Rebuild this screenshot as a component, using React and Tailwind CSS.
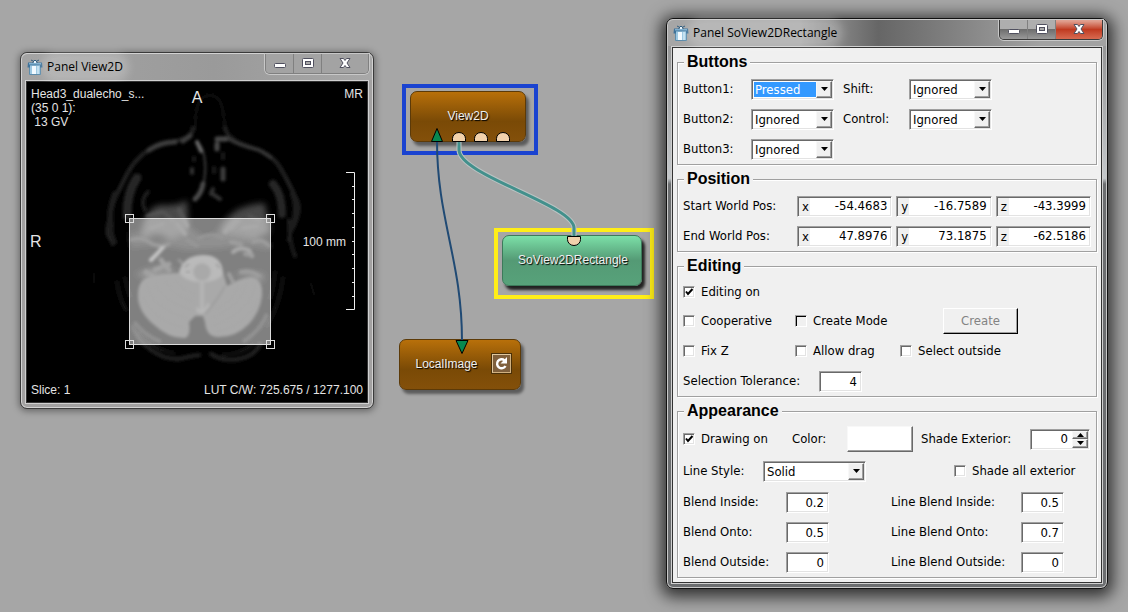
import { useState } from "react";
import { clsx } from "clsx";

const sunken =
  "border border-t-[#a0a0a0] border-l-[#a0a0a0] border-b-white border-r-white shadow-[inset_1px_1px_0_#696969,inset_-1px_-1px_0_#e3e3e3]";
const raised =
  "border border-t-[#f8f8f8] border-l-[#f8f8f8] border-b-[#696969] border-r-[#696969] bg-[#f0f0f0] shadow-[inset_-1px_-1px_0_#a0a0a0]";

const PanelIcon = () => (
  <svg className="w-4 h-4 shrink-0" viewBox="0 0 16 16">
    <path d="M2.500 6h11v9.500h-11z" fill="#9cc8e2" />
    <path d="M2.500 6h11v9.500h-11z" fill="none" stroke="#5d8cab" />
    <path d="M5 7h4v8H5z" fill="#f2faff" />
    <path d="M10 7h2v8h-2z" fill="#c4e0f0" />
    <path d="M1 3.500h14l.5 5H13V6H3v2.500H.5z" fill="#3f7299" />
    <path d="M2 4h12v1.500H2z" fill="#7fb0d0" />
    <path d="M4 1l3 1.500M12 1L9 2.500M5.500 3.500L8 1l2.500 2.500" stroke="#2f5d80" fill="none" />
    <path d="M7 2h2v2H7z" fill="#e8f4fb" />
  </svg>
);

const CaptionButtons = ({ active }) => {
  const face = active
    ? "bg-linear-to-b from-[#aeaeae] from-45% via-[#6e6e6e] via-50% to-[#9a9a9a]"
    : "bg-[#a3a3a3]";
  return (
    <div
      className={clsx(
        "flex h-5 rounded-b-[5px] border border-t-0 overflow-hidden shadow-[0_0_0_1px_#c8c8c8]",
        active ? "border-[#3a3a3a]" : "border-[#808080]"
      )}
    >
      <button aria-label="Minimize" className={clsx("w-7 flex items-center justify-center border-r border-[#808080]", face)}>
        <svg width="14" height="14" viewBox="0 0 14 14">
          <rect x="1.500" y="6.500" width="11" height="4" rx="1" fill="#fff" stroke="#50505f" />
        </svg>
      </button>
      <button aria-label="Maximize" className={clsx("w-7 flex items-center justify-center border-r border-[#808080]", face)}>
        <svg width="14" height="14" viewBox="0 0 14 14">
          <rect x="1.500" y="1.500" width="11" height="9" rx="1" fill="#fff" stroke="#50505f" />
          <rect x="4.500" y="4.500" width="5" height="3" fill="#aaa" stroke="#50505f" />
        </svg>
      </button>
      <button
        aria-label="Close"
        className={clsx(
          "w-[46px] flex items-center justify-center",
          active
            ? "bg-linear-to-b from-[#e0a090] from-5% via-[#c03a20] via-50% to-[#d86a50]"
            : "bg-[#a3a3a3]"
        )}
      >
        <svg width="14" height="14" viewBox="0 0 14 14">
          <path
            d="M2 1.500h3.500L7 3.500l1.500-2H12L9 6l3 4.500H8.500L7 8.500l-1.500 2H2L5 6z"
            fill="#fff"
            stroke="#50505f"
            strokeLinejoin="round"
          />
        </svg>
      </button>
    </div>
  );
};

const Window = ({ title, active, className, children }) => (
  <section
    className={clsx(
      "absolute rounded-[7px] border px-1 pb-1",
      active
        ? "border-[#111] bg-linear-to-b from-[#8c8c8c] via-[#c4c8cb] via-28% to-[#6c6e70] to-29% shadow-[inset_0_0_0_1px_#c9c9c9,0_3px_16px_5px_rgba(0,0,0,0.7)]"
        : "border-[#3a3a3a] bg-[#a2a1a1] shadow-[inset_0_0_0_1px_#d2d2d2,0_1px_7px_1px_rgba(0,0,0,0.4)]",
      className
    )}
  >
    <header
      className={clsx(
        "h-[27px] -mx-[3px] pl-1 pr-[3px] flex items-start justify-between rounded-t-md border-t",
        active
          ? "border-[#c9c9c9] bg-linear-to-r from-[#a6a6a6] from-30% via-[#666] via-48% to-[#a2a2a2] to-85%"
          : "border-[#d2d2d2] bg-linear-to-r from-[#a4a4a4] via-[#9a9a9a] via-55% to-[#a8a8a8]"
      )}
    >
      <div className="flex items-center gap-1 h-[26px] pl-[1px]">
        <PanelIcon />
        <h2 className="font-['Open_Sans','Noto_Sans',sans-serif] text-xs leading-5 text-black rounded-full bg-white/20 shadow-[0_0_8px_6px_rgba(255,255,255,0.2)]">
          {title}
        </h2>
      </div>
      <CaptionButtons active={active} />
    </header>
    <div className="border border-[#d0d0d0]">
      <div className="border border-[#333]">{children}</div>
    </div>
  </section>
);

// Axial slice of the head, drawn in viewer coordinates (340 x 320)
const HeadSlice = () => (
  <svg className="absolute inset-0 w-full h-full" viewBox="0 0 340 320" preserveAspectRatio="none">
    <defs>
      <filter id="soft" x="-20%" y="-20%" width="140%" height="140%">
        <feGaussianBlur stdDeviation="1.500" />
      </filter>
      <filter id="softer" x="-20%" y="-20%" width="140%" height="140%">
        <feGaussianBlur stdDeviation="3" />
      </filter>
    </defs>

    {/* skin and nose */}
    <g fill="none" filter="url(#soft)" strokeLinecap="round">
      <path d="M168 48C168 30 170 13 183 13S197 32 198 48" stroke="#121212" strokeWidth="2" />
      <path d="M166 46C165 58 150 58 136 62S108 76 99 94 86 118 82 138 84 154 86 162" stroke="#222" strokeWidth="4" />
      <path d="M198 46C202 60 216 62 232 68S254 86 262 102 274 122 270 136 264 142 262 158" stroke="#222" strokeWidth="4" />
      <path d="M148 60Q134 60 122 68M163 54L156 59" stroke="#3e3e3e" strokeWidth="5" />
      <path d="M200 56Q212 64 232 68L244 76" stroke="#3a3a3a" strokeWidth="3" />
      <path d="M110 96Q100 110 100 134" stroke="#262626" strokeWidth="9" />
      <path d="M246 102Q255 112 255 132" stroke="#262626" strokeWidth="8" />
      <path d="M88 112Q81 130 84 144" stroke="#1c1c1c" strokeWidth="6" />
      <path d="M266 112Q272 126 266 144" stroke="#1c1c1c" strokeWidth="6" />
      <path d="M121 110Q113 118 118 128" stroke="#1d1d1d" strokeWidth="4" />
      <path d="M90 200Q92 216 99 228M98 196Q100 206 103 214" stroke="#181818" strokeWidth="3" />
      <path d="M256 196Q253 222 240 244M248 190Q246 208 243 216" stroke="#141414" strokeWidth="3" />
      <path d="M84 140Q84 152 88 160M262 138Q262 160 268 174" stroke="#1c1c1c" strokeWidth="4" />
      <path d="M106 245C112 262 132 278 152 277Q164 274 172 273M184 272Q196 280 212 277T233 262" stroke="#242424" strokeWidth="4" />
      <path d="M112 250Q126 268 146 271M196 273Q216 272 226 262" stroke="#141414" strokeWidth="3" />
      <path d="M67 192V200M284 202L287 212" stroke="#101010" strokeWidth="2" />
    </g>

    {/* nasal cavity */}
    <g fill="none" filter="url(#soft)" strokeLinecap="round">
      <path d="M172 62Q177 68 178 80Q179 92 176 103" stroke="#3c3c3c" strokeWidth="2" />
      <path d="M170 60L174 69" stroke="#6a6a6a" strokeWidth="4" />
      <path d="M176 102Q174 112 168 117" stroke="#4c4c4c" strokeWidth="5" />
      <path d="M190 57H199M190 62V67" stroke="#4a4a4a" strokeWidth="5" />
      <path d="M196 87V97" stroke="#3c3c3c" strokeWidth="5" />
      <path d="M165 87V91M184 111L193 117M186 107L184 112" stroke="#333" strokeWidth="4" />
      <path d="M167 76V78M196 72V76M187 86V90" stroke="#1c1c1c" strokeWidth="4" />
    </g>

    {/* skull base */}
    <g filter="url(#softer)">
      <path d="M114 150Q120 122 136 123T160 118L162 150Q152 164 140 156T112 160z" fill="#484848" />
      <path d="M194 144Q204 128 220 124T238 122L243 150 226 158Q208 158 202 162L190 156z" fill="#464646" />
      <path d="M102 150Q116 152 124 158T158 150L168 148 176 156 190 150Q210 152 243 160V168Q214 160 196 166L160 168Q130 160 104 166z" fill="#242424" />
      <path d="M108 192Q124 184 140 186L152 190 120 198zM206 192Q222 188 238 192L236 200z" fill="#333" />
    </g>
    <g fill="none" filter="url(#soft)" strokeLinecap="round">
      <path d="M152 128L160 144M198 150L208 138M150 142L158 152M204 146L212 138" stroke="#555" strokeWidth="4" />
      <path d="M120 134L136 130 146 138M124 146L136 142M222 134L232 138M216 146L230 144" stroke="#555" strokeWidth="3" />
      <path d="M124 178L130 172L137 164" stroke="#8c8c8c" strokeWidth="4" />
      <path d="M128 188L142 182M134 178L142 188M119 190L126 194" stroke="#444" strokeWidth="5" />
      <path d="M206 170Q212 164 222 168L225 174" stroke="#555" strokeWidth="4" />
      <path d="M204 160L214 162M218 172L224 173M202 192L206 200M214 190Q224 188 232 194" stroke="#3e3e3e" strokeWidth="4" />
      <path d="M152 178L158 184M172 156Q186 150 196 156M160 158L170 164" stroke="#303030" strokeWidth="3" />
      <path d="M104 158Q114 154 122 160T142 162M226 160Q236 156 242 164" stroke="#404040" strokeWidth="3" />
    </g>

    {/* cerebellum */}
    <g filter="url(#soft)">
      <path d="M111 212Q111 197 124 194T152 191Q158 180 176 180 192 180 196 190L200 204Q212 196 224 195 236 196 235 214 233 230 222 242 208 256 190 255 179 254 178 240L176 234H168L162 240Q164 254 158 256 142 257 126 242 110 228 111 212z" fill="#535353" />
      <path d="M107 240Q118 254 134 260M240 232Q234 248 216 260" fill="none" stroke="#262626" strokeWidth="4" />
      <path d="M152 190Q156 174 175 173T196 190Q195 198 176 200 158 200 152 190z" fill="#757575" />
      <path d="M175 200V230M170 226Q174 236 182 222" fill="none" stroke="#6e6e6e" strokeWidth="3" />
      <path d="M198 204Q192 216 178 232" fill="none" stroke="#3a3a3a" strokeWidth="2" />
      <circle cx="175" cy="190" r="9" fill="#525252" />
    </g>
    <path d="M158 185L162 182M189 182L193 186M159 190H163" fill="none" stroke="#444" strokeWidth="2" filter="url(#soft)" />
    <g fill="none" stroke="#474747" opacity="0.6" filter="url(#soft)">
      <path d="M120 202Q124 226 160 236M128 200Q134 220 166 228M138 198Q144 214 168 220M148 198Q154 208 168 212" />
      <path d="M228 202Q226 228 186 244M220 200Q216 222 186 236M212 202Q208 218 188 228" />
      <path d="M116 214Q124 238 158 246M232 216Q222 242 190 250" />
    </g>

    {/* rectangle overlay */}
    <rect x="102" y="136" width="141" height="126" fill="#fff" fillOpacity="0.500" />
    <g fill="none" stroke="#dcdcdc">
      <rect x="102.500" y="136.500" width="141" height="126" />
      <rect x="98.500" y="132.500" width="8" height="8" />
      <rect x="239.500" y="132.500" width="8" height="8" />
      <rect x="98.500" y="258.500" width="8" height="8" />
      <rect x="239.500" y="258.500" width="8" height="8" />
    </g>

    {/* ruler */}
    <path
      d="M319 90.500H327.500V227.500H319M325 104.500h2M325 117.500h2M325 131.500h2M325 145.500h2M325 159.500h2M325 172.500h2M325 186.500h2M325 200.500h2M325 214.500h2"
      fill="none"
      stroke="#eee"
    />
  </svg>
);

const Viewer = () => (
  <div className="relative h-80 bg-black px-1 py-[5px] flex flex-col justify-between text-xs leading-[14px] text-[#e4e4e4]">
    <HeadSlice />
    <div className="relative flex justify-between">
      <p className="whitespace-pre">{"Head3_dualecho_s...\n(35 0 1):\n 13 GV"}</p>
      <p>MR</p>
    </div>
    <div className="relative flex justify-between">
      <p>Slice: 1</p>
      <p>LUT C/W: 725.675 / 1277.100</p>
    </div>
    <span className="absolute left-1/2 top-2 -translate-x-1/2 text-base leading-4">A</span>
    <span className="absolute left-[3px] top-1/2 -translate-y-1/2 text-base leading-4">R</span>
    <span className="absolute right-[21px] top-1/2 -translate-y-1/2">100 mm</span>
  </div>
);

const Node = ({ name, green, className, children }) => (
  <div
    className={clsx(
      "absolute h-[51px] rounded-[7px] border pb-0.5 flex items-center justify-center gap-3.5 text-xs text-[#f0f0f0] [text-shadow:1px_1px_1px_#000]",
      green
        ? "border-[#3c7a5a] bg-linear-to-b from-[#7ce0a8] via-[#549a75] via-50% to-[#57a27a] shadow-[3px_4px_3px_rgba(0,0,0,0.8)]"
        : "border-[#5c3a08] bg-linear-to-b from-[#b8700a] via-[#7a4a06] via-60% to-[#84500a] shadow-[3px_4px_3px_rgba(0,0,0,0.45)]",
      className
    )}
  >
    <span>{name}</span>
    {children}
  </div>
);

const Network = () => (
  <>
    <div className="absolute left-[402px] top-[84px] w-[136px] h-[71px] border-4 border-[#1a43d0]" />
    <div className="absolute left-[494px] top-[228px] w-[160px] h-[71px] border-4 border-[#ffee18]" />
    <Node name="View2D" className="left-[410px] top-[91px] w-[116px]" />
    <Node name="SoView2DRectangle" green className="left-[502px] top-[235px] w-[140px] pl-0.5" />
    <Node name="LocalImage" className="left-[399px] top-[339px] w-[122px] pl-1.5">
      <button
        aria-label="Reload"
        className="w-[19px] h-[19px] flex items-center justify-center border border-t-[#e0c8a0] border-l-[#e0c8a0] border-b-[#d0b080] border-r-[#d0b080] bg-[#80603c] shadow-[0_0_0_1px_#4a3008]"
      >
        <svg width="15" height="15" viewBox="0 0 15 15">
          <path d="M10.500 4.300A4.500 4.500 0 1 0 11.500 10" fill="none" stroke="#fff" strokeWidth="2.400" />
          <path d="M13 1v6.500H6.500z" fill="#fff" />
        </svg>
      </button>
    </Node>
    <svg className="absolute left-0 top-0 w-[660px] h-[400px] pointer-events-none" viewBox="0 0 660 400">
      <path d="M437 141C437 220 462 260 462 341" fill="none" stroke="#204a74" strokeWidth="2" />
      <path d="M459 141V150C459 175 574 205 574 228V237" fill="none" stroke="#bcc4c4" strokeWidth="5" />
      <path d="M459 141V150C459 175 574 205 574 228V237" fill="none" stroke="#43908c" strokeWidth="3" />
      <path d="M437 128.500L442.500 141.500H431.500z" fill="#088850" stroke="#000" />
      <path d="M462 353.500L456 340.500H468z" fill="#088850" stroke="#000" />
      <g fill="#f2d2ac" stroke="#000">
        <path d="M452.500 141.500V138.500a6.500 6 0 0 1 13 0V141.500z" />
        <path d="M474.500 141.500V138.500a6.500 6 0 0 1 13 0V141.500z" />
        <path d="M496.500 141.500V138.500a6.500 6 0 0 1 13 0V141.500z" />
        <path d="M567.500 236.500V239.500a6.500 6 0 0 0 13 0V236.500z" />
      </g>
    </svg>
  </>
);

const Combo = ({ id, options, highlighted, className }) => (
  <div className={clsx("relative h-[21px] p-px flex bg-white", sunken, className)}>
    <select
      id={id}
      className={clsx(
        "appearance-none flex-1 min-w-0 mr-[15px] pl-px leading-4 outline-none border border-white",
        highlighted ? "bg-[#3399ff] text-white" : "bg-white text-black"
      )}
    >
      {options.map((o) => (
        <option key={o}>{o}</option>
      ))}
    </select>
    <span className={clsx("absolute right-px top-px bottom-px w-4 flex items-center justify-center pointer-events-none", raised)}>
      <svg width="7" height="4" viewBox="0 0 7 4">
        <path d="M0 0h7L3.500 4z" />
      </svg>
    </span>
  </div>
);

const NumberBox = ({ id, value, className }) => (
  <input
    id={id}
    defaultValue={value}
    className={clsx("h-[21px] w-[43px] bg-white pr-1 text-right outline-none", sunken, className)}
  />
);

const AxisBox = ({ axis, value, label }) => (
  <label className={clsx("flex h-[21px] flex-1 min-w-0 p-px bg-white", sunken)}>
    <span className="w-[11px] shrink-0 pl-[3px] leading-[17px] bg-[#f0f0f0]">{axis}</span>
    <input aria-label={`${label} ${axis}`} defaultValue={value} className="w-0 flex-1 min-w-0 pr-[3px] text-right outline-none" />
  </label>
);

const Check = ({ label, checked: initial = false, pressed, className }) => {
  const [checked, setChecked] = useState(initial);
  return (
    <label className={clsx("flex items-center gap-1.5 whitespace-nowrap", className)}>
      <span className="relative flex">
        <input
          type="checkbox"
          checked={checked}
          onChange={(e) => setChecked(e.target.checked)}
          className={clsx(
            "appearance-none w-3 h-3",
            pressed
              ? "border border-t-[#a0a0a0] border-l-[#a0a0a0] border-b-white border-r-white bg-[#f0f0f0] shadow-[inset_1px_1px_0_#000]"
              : clsx("bg-white", sunken)
          )}
        />
        {checked && (
          <svg className="absolute inset-0 w-3 h-3 pointer-events-none" viewBox="0 0 12 12">
            <path d="M3 5.500L5 8l4.500-5" fill="none" stroke="#000" strokeWidth="2" />
          </svg>
        )}
      </span>
      {label}
    </label>
  );
};

const Group = ({ title, children }) => (
  <fieldset className="min-w-0 border border-[#a0a0a0] px-[5px] shadow-[1px_1px_0_#fff,inset_1px_1px_0_#fff]">
    <legend className="relative ml-px px-[3px] h-6 leading-6 bg-[#f0f0f0] font-['Liberation_Sans',Arial,sans-serif] text-base font-bold">
      {title}
    </legend>
    {children}
  </fieldset>
);

const levels = ["Ignored", "Pressed"];

const ButtonsGroup = () => (
  <Group title="Buttons">
    <div className="grid grid-cols-[68px_83px_75px_83px] auto-rows-[30px] items-center">
      <label htmlFor="button1">Button1:</label>
      <Combo id="button1" options={["Pressed", "Ignored"]} highlighted />
      <label htmlFor="shift" className="pl-[9px]">Shift:</label>
      <Combo id="shift" options={levels} />
      <label htmlFor="button2">Button2:</label>
      <Combo id="button2" options={levels} />
      <label htmlFor="control" className="pl-[9px]">Control:</label>
      <Combo id="control" options={levels} />
      <label htmlFor="button3">Button3:</label>
      <Combo id="button3" options={levels} />
    </div>
  </Group>
);

const positions = [
  { label: "Start World Pos:", values: ["-54.4683", "-16.7589", "-43.3999"] },
  { label: "End World Pos:", values: ["47.8976", "73.1875", "-62.5186"] },
];

const PositionGroup = () => (
  <Group title="Position">
    {positions.map((p) => (
      <div key={p.label} className="flex items-center h-[30px]">
        <span className="w-[114px] shrink-0">{p.label}</span>
        <div className="flex flex-1 min-w-0 gap-1">
          {p.values.map((v, i) => (
            <AxisBox key={i} axis={"xyz"[i]} value={v} label={p.label} />
          ))}
        </div>
      </div>
    ))}
  </Group>
);

const EditingGroup = () => (
  <Group title="Editing">
    <div className="flex items-center h-7">
      <Check label="Editing on" checked />
    </div>
    <div className="flex items-center h-[30px]">
      <Check label="Cooperative" className="w-28" />
      <Check label="Create Mode" pressed className="w-[148px]" />
      <button
        disabled
        className="w-[75px] h-[26px] border border-t-white border-l-white border-b-black border-r-black shadow-[inset_-1px_-1px_0_#a0a0a0] text-[#838383]"
      >
        Create
      </button>
    </div>
    <div className="flex items-center h-[30px]">
      <Check label="Fix Z" className="w-28" />
      <Check label="Allow drag" className="w-[105px]" />
      <Check label="Select outside" />
    </div>
    <div className="flex items-center h-[30px]">
      <label htmlFor="tolerance" className="w-[136px]">Selection Tolerance:</label>
      <NumberBox id="tolerance" value="4" />
    </div>
  </Group>
);

const blends = [
  { label: "Blend Inside:", value: "0.2" },
  { label: "Line Blend Inside:", value: "0.5" },
  { label: "Blend Onto:", value: "0.5" },
  { label: "Line Blend Onto:", value: "0.7" },
  { label: "Blend Outside:", value: "0" },
  { label: "Line Blend Outside:", value: "0" },
];

const AppearanceGroup = () => {
  const [shade, setShade] = useState(0);
  return (
    <Group title="Appearance">
      <div className="flex items-center h-8">
        <Check label="Drawing on" checked className="w-[109px]" />
        <span className="w-[55px]">Color:</span>
        <button
          aria-label="Color"
          className="w-[66px] h-[26px] bg-white border border-t-[#f8f8f8] border-l-[#f8f8f8] border-b-[#696969] border-r-[#696969] shadow-[inset_-1px_-1px_0_#a0a0a0]"
        />
        <label htmlFor="shade" className="w-[117px] pl-2">Shade Exterior:</label>
        <div className={clsx("flex h-[21px] w-[60px] p-px bg-white", sunken)}>
          <input
            id="shade"
            value={shade}
            onChange={(e) => setShade(Number(e.target.value) || 0)}
            className="w-0 flex-1 min-w-0 pr-1 text-right outline-none"
          />
          <div className="flex flex-col w-4">
            <button aria-label="Increase" onClick={() => setShade(shade + 1)} className={clsx("flex-1 flex items-center justify-center", raised)}>
              <svg width="7" height="4" viewBox="0 0 7 4"><path d="M0 4h7L3.500 0z" /></svg>
            </button>
            <button aria-label="Decrease" onClick={() => setShade(shade - 1)} className={clsx("flex-1 flex items-center justify-center", raised)}>
              <svg width="7" height="4" viewBox="0 0 7 4"><path d="M0 0h7L3.500 4z" /></svg>
            </button>
          </div>
        </div>
      </div>
      <div className="flex items-center h-8">
        <label htmlFor="lineStyle" className="w-20">Line Style:</label>
        <Combo id="lineStyle" options={["Solid", "Dashed", "Dotted"]} className="w-[103px]" />
        <Check label="Shade all exterior" className="ml-[88px]" />
      </div>
      <div className="grid grid-cols-[103px_105px_130px_43px] auto-rows-[30px] items-center">
        {blends.map((b) => (
          <div key={b.label} className="contents">
            <label htmlFor={b.label}>{b.label}</label>
            <NumberBox id={b.label} value={b.value} />
          </div>
        ))}
      </div>
    </Group>
  );
};

export default function App() {
  return (
    <main className="relative min-h-screen overflow-hidden bg-[#a6a6a6] font-['Liberation_Sans',Arial,sans-serif]">
      <Network />
      <Window title="Panel View2D" className="left-[20px] top-[52px] w-[354px]">
        <Viewer />
      </Window>
      <Window title="Panel SoView2DRectangle" active className="left-[666px] top-[18px] w-[442px]">
        <form
          onSubmit={(e) => e.preventDefault()}
          className="flex flex-col gap-0.5 bg-[#f0f0f0] px-1 pt-0.5 pb-1 font-['DejaVu_Sans_Condensed','DejaVu_Sans',sans-serif] text-[13px] leading-4 text-black"
        >
          <ButtonsGroup />
          <PositionGroup />
          <EditingGroup />
          <AppearanceGroup />
        </form>
      </Window>
    </main>
  );
}
